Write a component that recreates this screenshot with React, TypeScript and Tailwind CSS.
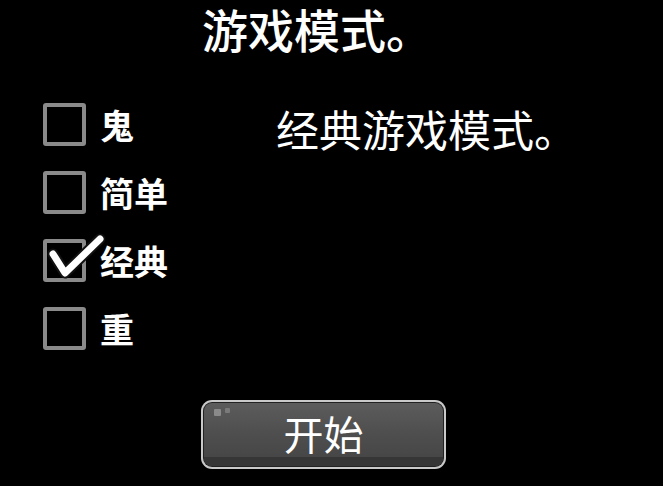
import React from "react";

const CJK = { fontFamily: '"Noto Sans CJK SC", "Noto Sans", sans-serif' };

type Mode = { label: string; checked: boolean };

const modes: Mode[] = [
  { label: "鬼", checked: false },
  { label: "简单", checked: false },
  { label: "经典", checked: true },
  { label: "重", checked: false },
];

function CheckMark() {
  return (
    <svg
      className="absolute left-[1px] top-[-10px] overflow-visible"
      width="60"
      height="50"
      viewBox="0 0 60 50"
    >
      <path
        d="M9 25 L21 44 L56 10"
        fill="none"
        stroke="#111"
        strokeWidth="11"
        strokeLinecap="round"
        strokeLinejoin="round"
      />
      <path
        d="M9 25 L21 44 L56 10"
        fill="none"
        stroke="#fff"
        strokeWidth="7"
        strokeLinecap="round"
        strokeLinejoin="round"
      />
    </svg>
  );
}

function ModeRow({ mode }: { mode: Mode }) {
  return (
    <div className="flex items-center h-[43px]">
      <div className="relative w-[43px] h-[43px]">
        <div className="w-[43px] h-[43px] border-[4px] border-[#8a8a8a] rounded-[3px]" />
        {mode.checked && <CheckMark />}
      </div>
      <span
        className="ml-[14px] text-[34px] font-bold text-white leading-none"
        style={CJK}
      >
        {mode.label}
      </span>
    </div>
  );
}

export default function App() {
  return (
    <div className="w-[663px] h-[486px] bg-black overflow-hidden flex flex-col" style={CJK}>
      <div className="pl-[202px] text-[46px] font-medium text-white leading-[56px]">
        游戏模式。
      </div>
      <div className="flex mt-[47px]">
        <div className="pl-[43px] flex flex-col gap-[25px] w-[276px]">
          {modes.map((m) => (
            <ModeRow key={m.label} mode={m} />
          ))}
        </div>
        <div className="text-[43px] text-white leading-[50px]">
          经典游戏模式。
        </div>
      </div>
      <div className="pl-[201px] mt-[50px]">
        <div className="relative w-[245px] h-[69px] rounded-[11px] bg-[#c9c9c9] p-[2px]">
          <div className="w-full h-full rounded-[9px] bg-[#222] p-[1px]">
            <div className="relative w-full h-full rounded-[8px] bg-gradient-to-b from-[#5c5c5c] via-[#4e4e4e] to-[#444] overflow-hidden flex items-center justify-center">
              <div className="absolute left-0 right-0 bottom-0 h-[9px] bg-[#363636]" />
              <div className="absolute left-[10px] top-[6px] w-[7px] h-[7px] bg-[#8a8a8a] rounded-[1px]" />
              <div className="absolute left-[21px] top-[5px] w-[5px] h-[5px] bg-[#7a7a7a] rounded-[1px]" />
              <span className="relative -mt-[4px] text-[40px] text-white leading-none">开始</span>
            </div>
          </div>
        </div>
      </div>
    </div>
  );
}
